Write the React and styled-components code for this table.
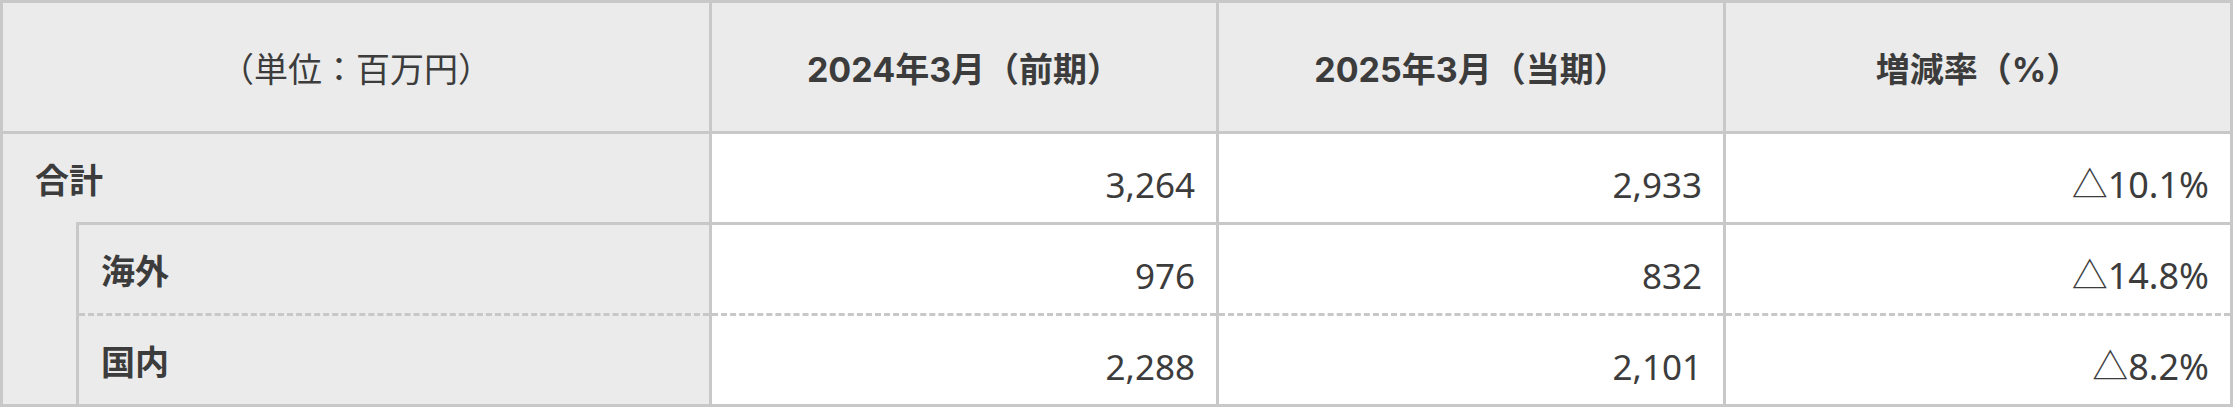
import React from "react";
import styled, { createGlobalStyle } from "styled-components";

const GlobalStyle = createGlobalStyle`
  body {
    margin: 0;
    background: #ffffff;
    font-family: "Noto Sans", "Noto Sans CJK JP", sans-serif;
    color: #3c3c3c;
  }
`;

const line = "#c8c8c8";

const Table = styled.table`
  width: 2230px;
  table-layout: fixed;
  border-collapse: collapse;
  border: 3px solid ${line};
`;

const Row = styled.tr`
  height: ${(p) => p.$h}px;
`;

const HeadCell = styled.th`
  padding: 0;
  background: #ebebeb;
  border: 3px solid ${line};
  font-family: ${(p) => (p.$light ? '"Noto Sans"' : "Inter")}, "Noto Sans CJK JP", sans-serif;
  font-size: 34px;
  font-weight: ${(p) => (p.$light ? 400 : 700)};
  text-align: center;
  vertical-align: middle;
`;

const LabelCell = styled.td`
  padding: 0 0 0 ${(p) => p.$indent}px;
  background: #ebebeb;
  border: 3px solid ${line};
  border-top-style: ${(p) => (p.$dashTop ? "dashed" : "solid")};
  border-bottom-style: ${(p) => (p.$open ? "none" : p.$dashBottom ? "dashed" : "solid")};
  font-size: 34px;
  font-weight: 700;
  vertical-align: middle;
`;

const Strip = styled.td`
  padding: 0;
  background: #ebebeb;
  border: 3px solid ${line};
  border-top: none;
`;

const ValueCell = styled.td`
  padding: ${(p) => (p.$rate ? 8 : 12)}px 21px 0 0;
  background: #ffffff;
  border: 3px solid ${line};
  border-top-style: ${(p) => (p.$dashTop ? "dashed" : "solid")};
  border-bottom-style: ${(p) => (p.$dashBottom ? "dashed" : "solid")};
  font-size: ${(p) => (p.$rate ? 36 : 35)}px;
  text-align: right;
  vertical-align: middle;
  white-space: nowrap;
`;

const rows = [
  { label: "海外", prev: "976", cur: "832", rate: "△14.8%" },
  { label: "国内", prev: "2,288", cur: "2,101", rate: "△8.2%" },
];

export default function App() {
  return (
    <>
      <GlobalStyle />
      <Table>
        <colgroup>
          <col style={{ width: 76 }} />
          <col style={{ width: 633 }} />
          <col style={{ width: 507 }} />
          <col style={{ width: 507 }} />
          <col style={{ width: 507 }} />
        </colgroup>
        <thead>
          <Row $h={131}>
            <HeadCell colSpan={2} $light>
              （単位：百万円）
            </HeadCell>
            <HeadCell>2024年3月（前期）</HeadCell>
            <HeadCell>2025年3月（当期）</HeadCell>
            <HeadCell>増減率（%）</HeadCell>
          </Row>
        </thead>
        <tbody>
          <Row $h={91}>
            <LabelCell colSpan={2} $indent={32} $open>
              合計
            </LabelCell>
            <ValueCell>3,264</ValueCell>
            <ValueCell>2,933</ValueCell>
            <ValueCell $rate>△10.1%</ValueCell>
          </Row>
          {rows.map((r, i) => {
            const dash = { $dashTop: i > 0, $dashBottom: i < rows.length - 1 };
            return (
              <Row $h={91} key={r.label}>
                {i === 0 && <Strip rowSpan={rows.length} />}
                <LabelCell $indent={22} {...dash}>
                  {r.label}
                </LabelCell>
                <ValueCell {...dash}>{r.prev}</ValueCell>
                <ValueCell {...dash}>{r.cur}</ValueCell>
                <ValueCell $rate {...dash}>
                  {r.rate}
                </ValueCell>
              </Row>
            );
          })}
        </tbody>
      </Table>
    </>
  );
}
